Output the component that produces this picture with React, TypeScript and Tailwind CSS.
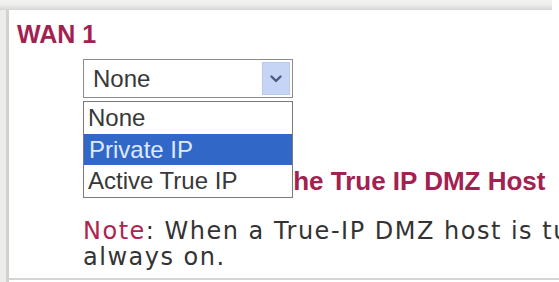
const options = ["None", "Private IP", "Active True IP"]

export default function App() {
  return (
    <div className="w-[559px] h-[282px] overflow-hidden bg-white flex flex-col font-['Liberation_Sans',Arial,sans-serif]">
      {/* top shadow band */}
      <div className="h-[10px] w-[552px] shrink-0 bg-gradient-to-b from-[#f3f3f1] via-[#ececea] to-[#d6d6d4]" />

      <div className="flex flex-1">
        {/* left frame */}
        <div className="w-[9px] shrink-0 bg-[#ededeb] border-r-[3px] border-[#d2d2d0]" />

        <div className="flex-1 relative pl-[8px] pt-[10px] mb-[2px] border-b-2 border-[#d4d4d2] overflow-hidden">
          <h2 className="text-[25px] leading-[28px] font-bold text-[#a3214f]">WAN 1</h2>

          {/* select with open list */}
          <div className="relative mt-[11px] ml-[66px] w-[210px]">
            <div className="h-[39px] border border-[#8c8c8c] flex items-center justify-between pl-[9px] pr-[2px] bg-white">
              <span className="text-[24px] leading-[28px] text-[#383838]">None</span>
              <span className="w-[28px] h-[33px] bg-[#c6d5f6] border border-[#b9caee] flex items-center justify-center">
                <svg width="12" height="8" viewBox="0 0 12 8" fill="none">
                  <path d="M1.5 1.5 L6 6 L10.5 1.5" stroke="#4b5c84" strokeWidth="2.4" strokeLinecap="round" strokeLinejoin="round" />
                </svg>
              </span>
            </div>

            <ul className="absolute top-[42px] left-0 w-[210px] border border-[#7a7a7a] bg-white z-10">
              {options.map((o, i) => (
                <li
                  key={o}
                  className={
                    i === 1
                      ? "h-[31px] pl-[5px] flex items-center text-[24px] leading-[28px] bg-[#3168c8] text-[#dfe9ff]"
                      : "h-[32px] pl-[4px] flex items-center text-[24px] leading-[28px] text-[#383838]"
                  }
                >
                  {o}
                </li>
              ))}
            </ul>
          </div>

          <p className="mt-[69px] ml-[175px] text-[26px] leading-[28px] font-bold text-[#a3214f] whitespace-nowrap">
            Enable the True IP DMZ Host
          </p>

          <p className="mt-[23px] ml-[66px] text-[24px] leading-[26px] tracking-[1.5px] text-[#333] font-['DejaVu_Sans',Verdana,sans-serif] whitespace-nowrap">
            <span className="text-[#b0224f]">Note</span>: When a True-IP DMZ host is turned on, it is
            <br />
            always on.
          </p>
        </div>
      </div>
    </div>
  )
}
